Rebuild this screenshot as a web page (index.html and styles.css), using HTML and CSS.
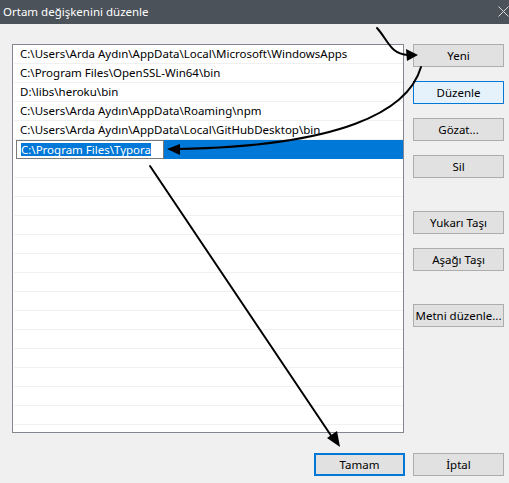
FILE: index.html
```html
<!DOCTYPE html>
<html lang="tr">
<head>
<meta charset="utf-8">
<title>Ortam değişkenini düzenle</title>
<link rel="stylesheet" href="styles.css">
</head>
<body>
<div class="window">
  <div class="titlebar">
    <span class="title">Ortam değişkenini düzenle</span>
    <svg class="close" width="11" height="11" viewBox="0 0 11 11"><path d="M0.5 0.5 L10.5 10.5 M10.5 0.5 L0.5 10.5" stroke="#d8dadc" stroke-width="1" fill="none"/></svg>
  </div>
  <div class="content">
    <div class="main">
      <div class="listbox">
        <div class="row">C:\Users\Arda Aydın\AppData\Local\Microsoft\WindowsApps</div>
        <div class="row">C:\Program Files\OpenSSL-Win64\bin</div>
        <div class="row">D:\libs\heroku\bin</div>
        <div class="row">C:\Users\Arda Aydın\AppData\Roaming\npm</div>
        <div class="row">C:\Users\Arda Aydın\AppData\Local\GitHubDesktop\bin</div>
        <div class="row row-selected">
          <div class="editbox"><span class="sel">C:\Program Files\Typora</span></div>
          <div class="fill"></div>
        </div>
        <div class="row"></div><div class="row"></div><div class="row"></div><div class="row"></div>
        <div class="row"></div><div class="row"></div><div class="row"></div><div class="row"></div>
        <div class="row"></div><div class="row"></div><div class="row"></div><div class="row"></div>
        <div class="row"></div><div class="row"></div>
      </div>
      <div class="buttons">
        <button class="btn">Yeni</button>
        <button class="btn btn-hover">Düzenle</button>
        <button class="btn">Gözat...</button>
        <button class="btn">Sil</button>
        <button class="btn gap-big">Yukarı Taşı</button>
        <button class="btn">Aşağı Taşı</button>
        <button class="btn gap-big">Metni düzenle...</button>
      </div>
    </div>
    <div class="footer">
      <button class="btn btn-default">Tamam</button>
      <button class="btn">İptal</button>
    </div>
  </div>
  <svg class="arrows" width="509" height="483" viewBox="0 0 509 483">
    <g fill="none" stroke="#000" stroke-width="2" stroke-linecap="round">
      <path d="M377 28 C388 40, 390 54, 408 55"/>
      <path d="M421 67 C408 112, 340 146, 178 149"/>
      <path d="M150 166 L334 440"/>
    </g>
    <g fill="#000">
      <path d="M418 55 L406 49 L407 61 Z"/>
      <path d="M167 149 L180 144 L180 155 Z"/>
      <path d="M340 447 L327 438 L337 431 Z"/>
    </g>
  </svg>
</div>
</body>
</html>
```
FILE: styles.css
```css
* { box-sizing: border-box; }
html, body { margin: 0; padding: 0; }
body {
  background: #f0f0f0;
  font-family: "Noto Sans", "Open Sans", sans-serif;
  font-size: 11.5px;
  color: #000;
  width: 509px;
  height: 483px;
  overflow: hidden;
}
.window { position: relative; width: 509px; height: 483px; }
.titlebar {
  height: 24px;
  background: #4b5259;
  color: #ffffff;
  display: flex;
  align-items: center;
  justify-content: space-between;
  padding: 0 0 0 3px;
}
.title { font-size: 11.5px; line-height: 24px; }
.close { margin-right: 0; margin-top: -1px; }
.content { padding: 20px 5px 0 12px; }
.main { display: flex; gap: 9px; }
.listbox {
  width: 392px;
  height: 389px;
  border: 1px solid #828790;
  background: #fff;
  overflow: hidden;
}
.row {
  height: 19px;
  margin: 0 0 0 1px;
  border-bottom: 1px solid #f0f0f0;
  padding-left: 6px;
  line-height: 18px;
  white-space: nowrap;
}
.row-selected {
  display: flex;
  padding-left: 0;
  margin-left: 0;
  border-bottom: none;
}
.editbox {
  margin-left: 3px;
  width: 148px;
  height: 19px;
  border: 1px solid #7a7a7a;
  background: #fff;
  padding: 2px 0 0 4px;
  line-height: 13px;
}
.sel { background: #0078d7; color: #fff; display: inline-block; height: 13px; line-height: 13px; }
.fill { flex: 1; background: #0078d7; height: 19px; }
.buttons { display: flex; flex-direction: column; width: 91px; gap: 14px; }
.btn {
  width: 91px;
  height: 23px;
  border: 1px solid #adadad;
  background: #e1e1e1;
  font-family: inherit;
  font-size: 11.5px;
  color: #000;
  padding: 0;
  margin: 0;
  line-height: 20px;
  white-space: nowrap;
}
.btn-hover { border-color: #0078d7; background: #e5f1fb; }
.btn-default { border: 2px solid #0078d7; }
.gap-big { margin-top: 19px; }
.footer { display: flex; justify-content: flex-end; gap: 8px; margin-top: 20px; }
.arrows { position: absolute; left: 0; top: 0; pointer-events: none; }
```
